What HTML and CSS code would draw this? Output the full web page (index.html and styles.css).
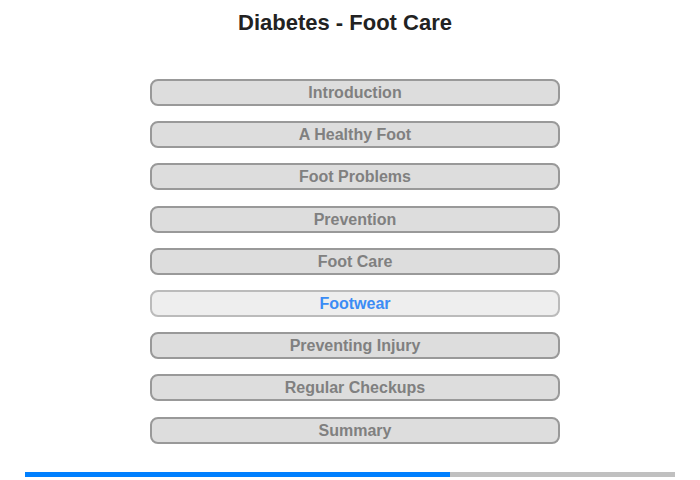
FILE: index.html
```html
<!DOCTYPE html>
<html lang="en">
<head>
  <meta charset="UTF-8">
  <title>Diabetes - Foot Care</title>
  <link rel="stylesheet" href="styles.css">
</head>
<body>
    <!-- Title -->
    <div class="title">Diabetes - Foot Care</div>

    <!-- Menu -->
    <div class="menu">
        <a class="menu-btn">Introduction</a>
        <a class="menu-btn">A Healthy Foot</a>
        <a class="menu-btn">Foot Problems</a>
        <a class="menu-btn">Prevention</a>
        <a class="menu-btn">Foot Care</a>
        <a class="menu-btn active">Footwear</a>
        <a class="menu-btn">Preventing Injury</a>
        <a class="menu-btn">Regular Checkups</a>
        <a class="menu-btn">Summary</a>
    </div>

    <!-- Progress -->
    <div class="progress">
        <div class="progress-fill" style="width: 65.4%;"></div>
    </div>
</body>
</html>
```

FILE: styles.css
```css
body {
    font-family: "Liberation Sans", Arial, sans-serif;
    margin: 0;
    padding: 0;
    background-color: #fff;
}

.title {
    font-size: 22px;
    font-weight: bold;
    color: #222;
    text-align: center;
    padding: 10px 10px 0 0;
    line-height: 26px;
}

.menu {
    display: flex;
    flex-direction: column;
    gap: 15.2px;
    width: 410px;
    margin: 43px 0 0 150px;
}

.menu-btn {
    display: block;
    height: 23px;
    line-height: 23px;
    border: 2px solid #999;
    border-radius: 8px;
    background-color: #ddd;
    color: #808080;
    font-size: 16px;
    font-weight: bold;
    text-align: center;
    cursor: pointer;
}

.menu-btn.active {
    background-color: #eee;
    border-color: #bbb;
    color: #3b8cf5;
}

.progress {
    margin: 28px 25px 0 25px;
    height: 5px;
    background-color: #c0c0c0;
}

.progress-fill {
    height: 100%;
    background-color: #0080ff;
}
```
